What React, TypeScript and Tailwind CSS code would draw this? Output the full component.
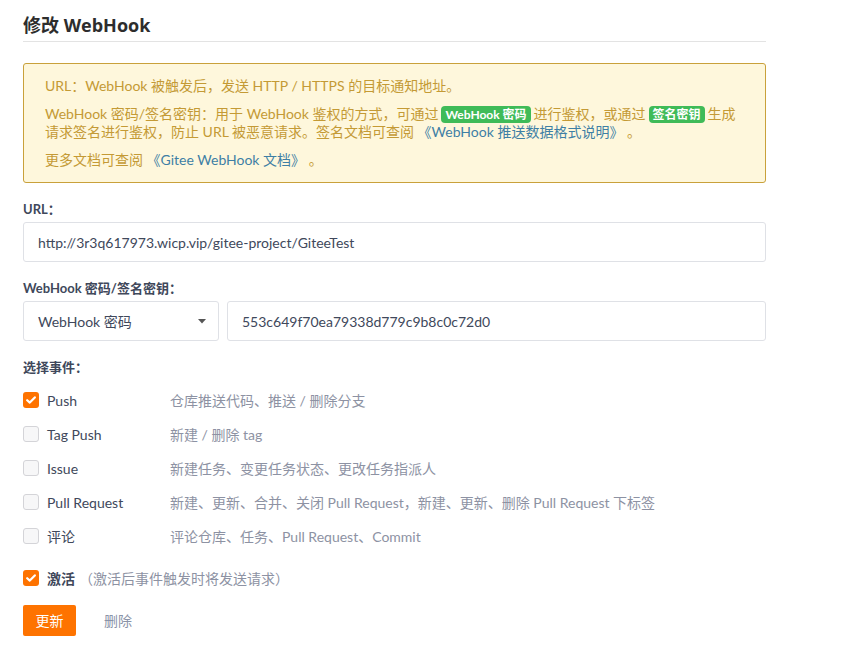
import { useState } from 'react';

const font = { fontFamily: 'Lato, "Noto Sans CJK SC", sans-serif' };
const titleFont = { fontFamily: '"Open Sans", "Noto Sans CJK SC", sans-serif' };

const events = [
  { key: 'push', label: 'Push', desc: '仓库推送代码、推送 / 删除分支', checked: true },
  { key: 'tag', label: 'Tag Push', desc: '新建 / 删除 tag', checked: false },
  { key: 'issue', label: 'Issue', desc: '新建任务、变更任务状态、更改任务指派人', checked: false },
  { key: 'pr', label: 'Pull Request', desc: '新建、更新、合并、关闭 Pull Request，新建、更新、删除 Pull Request 下标签', checked: false },
  { key: 'note', label: '评论', desc: '评论仓库、任务、Pull Request、Commit', checked: false },
];

function Check({ checked, onChange }: { checked: boolean; onChange: () => void }) {
  return (
    <button
      type="button"
      onClick={onChange}
      className={
        checked
          ? 'flex h-4 w-4 shrink-0 items-center justify-center rounded-[3px] bg-[#fe7300]'
          : 'h-4 w-4 shrink-0 rounded-[3px] border border-[#d4d4d8] bg-[#f7f7f8]'
      }
    >
      {checked && (
        <svg width="10" height="8" viewBox="0 0 10 8">
          <path d="M1.2 4.2 L3.8 6.6 L8.8 1.4" fill="none" stroke="#fff" strokeWidth="2.2" strokeLinecap="round" strokeLinejoin="round" />
        </svg>
      )}
    </button>
  );
}

function Badge({ children }: { children: React.ReactNode }) {
  return (
    <span className="mx-[3px] inline-block rounded-[4px] bg-[#3fbb58] px-[4px] text-[12px] font-bold leading-[17px] text-white">
      {children}
    </span>
  );
}

export default function App() {
  const [checked, setChecked] = useState<Record<string, boolean>>(
    Object.fromEntries(events.map((e) => [e.key, e.checked])),
  );
  const [active, setActive] = useState(true);

  return (
    <div className="min-h-screen bg-white text-[14px] text-[#40485b]" style={font}>
      <div className="ml-[23px] w-[743px] pt-[14px]">
        <h2 className="border-b border-[#e3e3e3] pb-[5px] text-[18px] font-bold leading-[22px] text-[#2d2d2d]" style={titleFont}>
          修改 WebHook
        </h2>

        <div className="mt-[21px] rounded-[3px] border border-[#c9a13b] bg-[#fef7dc] px-[21px] pb-[13px] pt-[13px] leading-[18px] text-[#c49a35]">
          <p>URL：WebHook 被触发后，发送 HTTP / HTTPS 的目标通知地址。</p>
          <p className="mt-[10px]">
            WebHook 密码/签名密钥：用于 WebHook 鉴权的方式，可通过<Badge>WebHook 密码</Badge>进行鉴权，或通过<Badge>签名密钥</Badge>生成请求签名进行鉴权，防止 URL 被恶意请求。签名文档可查阅
            <a className="text-[#3e7fa5]"> 《WebHook 推送数据格式说明》</a> 。
          </p>
          <p className="mt-[10px]">
            更多文档可查阅 <a className="text-[#3e7fa5]">《Gitee WebHook 文档》</a> 。
          </p>
        </div>

        <div className="mt-[17px] text-[13px] font-bold leading-[18px]">URL：</div>
        <input
          className="mt-[4px] h-[40px] w-full rounded-[3px] border border-[#dfe1e6] px-[14px] text-[14px] text-[#40485b] outline-none"
          defaultValue="http://3r3q617973.wicp.vip/gitee-project/GiteeTest"
        />

        <div className="mt-[17px] text-[13px] font-bold leading-[18px]">WebHook 密码/签名密钥：</div>
        <div className="mt-[4px] flex gap-[8px]">
          <div className="flex h-[40px] w-[196px] shrink-0 items-center justify-between rounded-[3px] border border-[#dfe1e6] pl-[14px] pr-[12px]">
            <span>WebHook 密码</span>
            <svg width="8" height="5" viewBox="0 0 8 5">
              <path d="M0 0 H8 L4 4.5 Z" fill="#555" />
            </svg>
          </div>
          <input
            className="h-[40px] flex-1 rounded-[3px] border border-[#dfe1e6] px-[14px] text-[14px] text-[#40485b] outline-none"
            defaultValue="553c649f70ea79338d779c9b8c0c72d0"
          />
        </div>

        <div className="mt-[17px] text-[13px] font-bold leading-[18px]">选择事件：</div>
        <div className="mt-[7px] flex flex-col">
          {events.map((e) => (
            <label key={e.key} className="flex h-[34px] items-center">
              <Check checked={checked[e.key]} onChange={() => setChecked({ ...checked, [e.key]: !checked[e.key] })} />
              <span className="ml-[8px] w-[123px]">{e.label}</span>
              <span className="text-[#8d92a3]">{e.desc}</span>
            </label>
          ))}
        </div>

        <label className="mt-[15px] flex h-[20px] items-center">
          <Check checked={active} onChange={() => setActive(!active)} />
          <span className="ml-[8px] font-bold">激活</span>
          <span className="ml-[4px] text-[#8d92a3]">（激活后事件触发时将发送请求）</span>
        </label>

        <div className="mt-[17px] flex items-center">
          <button className="h-[31px] w-[53px] rounded-[2px] bg-[#fe7300] text-[14px] text-white">更新</button>
          <button className="ml-[28px] text-[#8a93a8]">删除</button>
        </div>
      </div>
    </div>
  );
}
